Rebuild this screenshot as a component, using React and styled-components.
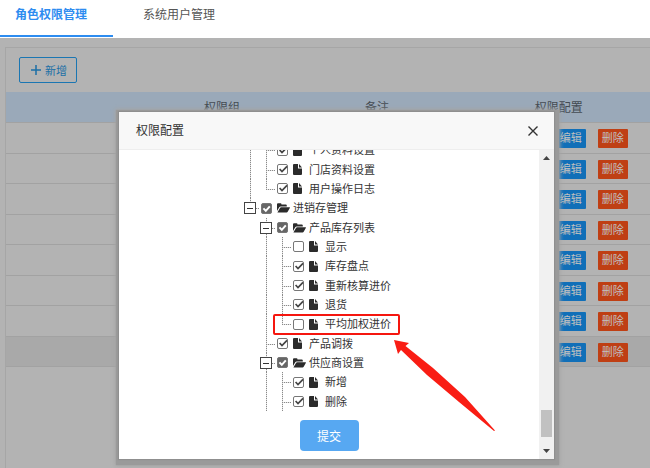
import React from "react";
import styled, { createGlobalStyle, css } from "styled-components";

const GlobalStyle = createGlobalStyle`
  *, *::before, *::after { box-sizing: border-box; }
  body {
    margin: 0;
    background: #b3b3b3;
    font-family: "Liberation Sans", "Noto Sans CJK SC", sans-serif;
    font-size: 12px;
    color: #333;
  }
  button, input { font: inherit; margin: 0; }
`;

const Page = styled.div`
  min-height: 100vh;
  display: flex;
  flex-direction: column;
`;

const Tabs = styled.nav`
  display: flex;
  height: 38px;
  padding-bottom: 1px;
  background: #fff;
`;

const Tab = styled.a`
  display: flex;
  align-items: center;
  padding: ${(p) => (p.$active ? "0 26px 6px 15px" : "0 30px 6px")};
  border-bottom: 2px solid ${(p) => (p.$active ? "#2d8cf0" : "transparent")};
  color: ${(p) => (p.$active ? "#2d8cf0" : "#555")};
  font-weight: ${(p) => (p.$active ? 700 : 400)};
  line-height: 18px;
  text-decoration: none;
`;

const Main = styled.main`
  position: relative;
  flex: 1;
  display: flex;
  overflow: hidden;
  padding: 9px 0 0 5px;
`;

const Panel = styled.section`
  flex: 1;
  border: 1px solid #a6a6a6;
  border-width: 1px 0 0 1px;
`;

const Toolbar = styled.div`
  padding: 9px 13px;
`;

const AddButton = styled.button`
  display: flex;
  align-items: center;
  gap: 3px;
  height: 26px;
  padding: 0 9px 0 10px;
  border: 1px solid #1b76b2;
  border-radius: 2px;
  background: transparent;
  color: #1b6fa6;
  font-size: 11px;
`;

const Table = styled.table`
  width: 100%;
  table-layout: fixed;
  border-collapse: collapse;
  text-align: center;
`;

const HeadCell = styled.th`
  width: ${(p) => p.$width};
  height: 30px;
  padding: 0;
  background: #9aa9b9;
  color: #444b52;
  font-weight: 400;
`;

const BodyRow = styled.tr`
  height: 31px;
  background: ${(p) => (p.$hover ? "#a9a9a9" : "transparent")};
  &:nth-child(even) { height: 30px; }
`;

const Cell = styled.td`
  padding: 2px 0 0 2px;
  border-top: 1px solid #a2a2a2;
  border-bottom: 1px solid #a2a2a2;
`;

const Actions = styled.div`
  display: flex;
  justify-content: center;
  gap: 12px;
`;

const ActionButton = styled.button`
  height: 19px;
  padding: 0 4px;
  border: 0;
  border-radius: 1px;
  background: ${(p) => (p.$danger ? "#bf3f14" : "#116fb8")};
  color: #c0c0c0;
  font-size: 11px;
  line-height: 19px;
`;

const Dialog = styled.section`
  position: absolute;
  top: 74px;
  left: 119px;
  right: 96px;
  height: 347px;
  display: flex;
  flex-direction: column;
  background: #fff;
  box-shadow: 0 0 1px 1px #8f8f8f, 1px 2px 1px 4px #9a9a9a, 1px 2px 4px 5px #a5a5a5;
`;

const DialogHeader = styled.header`
  display: flex;
  align-items: center;
  justify-content: space-between;
  height: 38px;
  padding: 0 15px 0 17px;
  background: #f8f8f8;
  border-bottom: 1px solid #eee;
`;

const DialogTitle = styled.h2`
  margin: 0;
  font-size: 12px;
  font-weight: 400;
  line-height: 18px;
`;

const CloseButton = styled.button`
  display: flex;
  padding: 0;
  border: 0;
  background: none;
`;

const DialogBody = styled.div`
  flex: 1;
  min-height: 0;
  display: flex;
`;

const Form = styled.form`
  flex: 1;
  min-width: 0;
  display: flex;
  flex-direction: column;
  align-items: center;
  gap: 9px;
`;

const TreeView = styled.div`
  position: relative;
  align-self: stretch;
  height: 261px;
  overflow: hidden;
  display: flex;
  flex-direction: column;
  justify-content: flex-end;
`;

const Tree = styled.ul`
  margin: 0;
  padding: 0 0 0 123px;
  list-style: none;
`;

const TreeRow = styled.li`
  display: flex;
  height: 19px;
  &:nth-child(3n + 1) { height: 20px; }
`;

const verticalDots = "repeating-linear-gradient(to bottom, #8a8a8a 0 1px, #e4e4e4 1px 2px)";
const horizontalDots = "repeating-linear-gradient(to right, #8a8a8a 0 1px, #e4e4e4 1px 2px)";

const Guide = styled.span`
  position: relative;
  flex: none;
  display: flex;
  align-items: center;
  width: ${(p) => (p.$kind === "blank" || p.$kind === "line" ? "16px" : "17px")};
  ${(p) =>
    p.$kind !== "blank" &&
    css`
      &::before {
        content: "";
        position: absolute;
        left: 8px;
        top: 0;
        bottom: ${p.$kind === "end" ? "50%" : "0"};
        width: 1px;
        background: ${verticalDots};
      }
    `}
  ${(p) =>
    (p.$kind === "branch" || p.$kind === "end") &&
    css`
      &::after {
        content: "";
        position: absolute;
        left: 8px;
        right: 0;
        top: 50%;
        height: 1px;
        background: ${horizontalDots};
      }
    `}
`;

const Toggle = styled.button`
  position: relative;
  z-index: 1;
  flex: none;
  width: 12px;
  height: 12px;
  margin-left: 2px;
  padding: 0;
  border: 1px solid #444;
  background: #fff;
  &::before {
    content: "";
    position: absolute;
    left: 2px;
    right: 2px;
    top: 5px;
    border-top: 1px solid #333;
  }
`;

const NodeLabel = styled.label`
  display: flex;
  align-items: center;
  font-size: 11px;
  line-height: 18px;
  white-space: nowrap;
`;

const CheckWrap = styled.span`
  display: grid;
  margin: 0 5px 0 2px;
  & > * { grid-area: 1 / 1; }
`;

const CheckInput = styled.input`
  appearance: none;
  width: 11px;
  height: 11px;
  border: 1px solid #777;
  border-radius: 2px;
  background: ${(p) => (p.$filled ? "#666" : "#fff")};
`;

const CheckMark = styled.svg`
  width: 11px;
  height: 11px;
  pointer-events: none;
  overflow: visible;
  fill: none;
  stroke: ${(p) => (p.$filled ? "#fff" : "#444")};
  stroke-width: ${(p) => (p.$filled ? 2 : 1.7)};
`;

const IconSlot = styled.span`
  display: flex;
  width: 16px;
`;

const Highlight = styled.div`
  position: absolute;
  left: 154px;
  top: 164px;
  width: 127px;
  height: 21px;
  border: 2px solid #f5160f;
  border-radius: 2px;
`;

const Arrow = styled.svg`
  position: absolute;
  left: 274px;
  top: 227px;
  width: 104px;
  height: 94px;
  pointer-events: none;
`;

const SubmitButton = styled.button`
  width: 59px;
  height: 31px;
  border: 0;
  border-radius: 4px;
  background: #57a8f2;
  color: #fff;
  font-size: 12px;
`;

const Scrollbar = styled.div`
  display: flex;
  flex-direction: column;
  align-items: center;
  width: 15px;
  padding: 6px 0;
  background: #f1f1f1;
`;

const ScrollThumb = styled.div`
  width: 11px;
  height: 27px;
  margin: auto 0 12px;
  background: #c1c1c1;
`;

const Triangle = styled.svg`
  width: 7px;
  height: 4px;
  fill: #444;
`;

const nodes = [
  { id: "personal", label: "个人资料设置", guides: ["line", "branch"], checked: true },
  { id: "store", label: "门店资料设置", guides: ["line", "branch"], checked: true },
  { id: "log", label: "用户操作日志", guides: ["line", "end"], checked: true },
  { id: "inventory", label: "进销存管理", guides: [], folder: "end", checked: true },
  { id: "stock", label: "产品库存列表", guides: ["blank"], folder: "branch", checked: true },
  { id: "show", label: "显示", guides: ["blank", "line", "branch"] },
  { id: "count", label: "库存盘点", guides: ["blank", "line", "branch"], checked: true },
  { id: "recalc", label: "重新核算进价", guides: ["blank", "line", "branch"], checked: true },
  { id: "return", label: "退货", guides: ["blank", "line", "branch"], checked: true },
  { id: "average", label: "平均加权进价", guides: ["blank", "line", "end"] },
  { id: "transfer", label: "产品调拨", guides: ["blank", "branch"], checked: true },
  { id: "supplier", label: "供应商设置", guides: ["blank"], folder: "branch", checked: true },
  { id: "supplier-add", label: "新增", guides: ["blank", "line", "branch"], checked: true },
  { id: "supplier-del", label: "删除", guides: ["blank", "line", "branch"], checked: true },
];

function FileIcon() {
  return (
    <svg width="10" height="11" viewBox="0 0 10 11" fill="#2b2b2b" aria-hidden="true">
      <path d="M1 0h4v4.4h4V10a1 1 0 0 1-1 1H1a1 1 0 0 1-1-1V1a1 1 0 0 1 1-1Z" />
      <path d="M6 0l3 3.4H6Z" />
    </svg>
  );
}

function FolderIcon() {
  return (
    <svg width="13" height="10" viewBox="0 0 13 10" fill="#2b2b2b" aria-hidden="true">
      <path d="M0 8V1.2Q0 .2 1 .2h2.6q.9 0 .9 1.2h4.3q1 0 1 1v1H3.7Q2.7 3.4 2.1 4.4Z" />
      <path d="M.4 9.4 3 5q.4-.7 1.1-.7H12.6q.6 0 .2.7L10.7 8.7q-.4.7-1.1.7Z" />
    </svg>
  );
}

function TreeNode({ node }) {
  const isFolder = Boolean(node.folder);
  return (
    <TreeRow>
      {node.guides.map((kind, i) => (
        <Guide key={i} $kind={kind} />
      ))}
      {isFolder && (
        <Guide $kind={node.folder}>
          <Toggle type="button" aria-label={"折叠" + node.label} />
        </Guide>
      )}
      <NodeLabel>
        <CheckWrap>
          <CheckInput type="checkbox" defaultChecked={node.checked} $filled={isFolder} />
          {node.checked && (
            <CheckMark viewBox="0 0 11 11" $filled={isFolder}>
              <path d={isFolder ? "M2.4 5.4 4.8 7.8 8.8 3.4" : "M2.6 5 5 7.5 10 2.4"} />
            </CheckMark>
          )}
        </CheckWrap>
        <IconSlot>{isFolder ? <FolderIcon /> : <FileIcon />}</IconSlot>
        {node.label}
      </NodeLabel>
    </TreeRow>
  );
}

export default function App() {
  return (
    <Page>
      <GlobalStyle />
      <Tabs>
        <Tab href="#roles" $active>角色权限管理</Tab>
        <Tab href="#users">系统用户管理</Tab>
      </Tabs>
      <Main>
        <Panel>
          <Toolbar>
            <AddButton type="button">
              <svg width="12" height="12" viewBox="0 0 12 12" stroke="currentColor" strokeWidth="1.5" aria-hidden="true">
                <path d="M1 6h10M6 1v10" />
              </svg>
              新增
            </AddButton>
          </Toolbar>
          <Table>
            <thead>
              <tr>
                <HeadCell $width="23.6%" />
                <HeadCell $width="19.9%">权限组</HeadCell>
                <HeadCell $width="28.2%">备注</HeadCell>
                <HeadCell $width="28.3%">权限配置</HeadCell>
              </tr>
            </thead>
            <tbody>
              {Array.from({ length: 8 }, (_, i) => (
                <BodyRow key={i} $hover={i === 7}>
                  <Cell />
                  <Cell />
                  <Cell />
                  <Cell>
                    <Actions>
                      <ActionButton type="button">权限配置</ActionButton>
                      <ActionButton type="button">编辑</ActionButton>
                      <ActionButton type="button" $danger>删除</ActionButton>
                    </Actions>
                  </Cell>
                </BodyRow>
              ))}
            </tbody>
          </Table>
        </Panel>
        <Dialog role="dialog" aria-labelledby="dialog-title">
          <DialogHeader>
            <DialogTitle id="dialog-title">权限配置</DialogTitle>
            <CloseButton type="button" aria-label="关闭">
              <svg width="12" height="12" viewBox="0 0 12 12" stroke="#333" strokeWidth="1.4" aria-hidden="true">
                <path d="M1.5 1.5l9 9M10.5 1.5l-9 9" />
              </svg>
            </CloseButton>
          </DialogHeader>
          <DialogBody>
            <Form>
              <TreeView>
                <Tree>
                  {nodes.map((node) => (
                    <TreeNode key={node.id} node={node} />
                  ))}
                </Tree>
                <Highlight />
              </TreeView>
              <SubmitButton type="submit">提交</SubmitButton>
            </Form>
            <Scrollbar>
              <Triangle viewBox="0 0 7 4"><path d="M3.5 0 7 4H0Z" /></Triangle>
              <ScrollThumb />
              <Triangle viewBox="0 0 7 4"><path d="M0 0h7L3.5 4Z" /></Triangle>
            </Scrollbar>
          </DialogBody>
          <Arrow viewBox="0 0 104 94" aria-hidden="true">
            <path fill="#f91d14" d="M1 1 16 4 12.500 7 40 29 72 58 102 91.500 101 92 66 63 34 36 8 11 5 15Z" />
          </Arrow>
        </Dialog>
      </Main>
    </Page>
  );
}
